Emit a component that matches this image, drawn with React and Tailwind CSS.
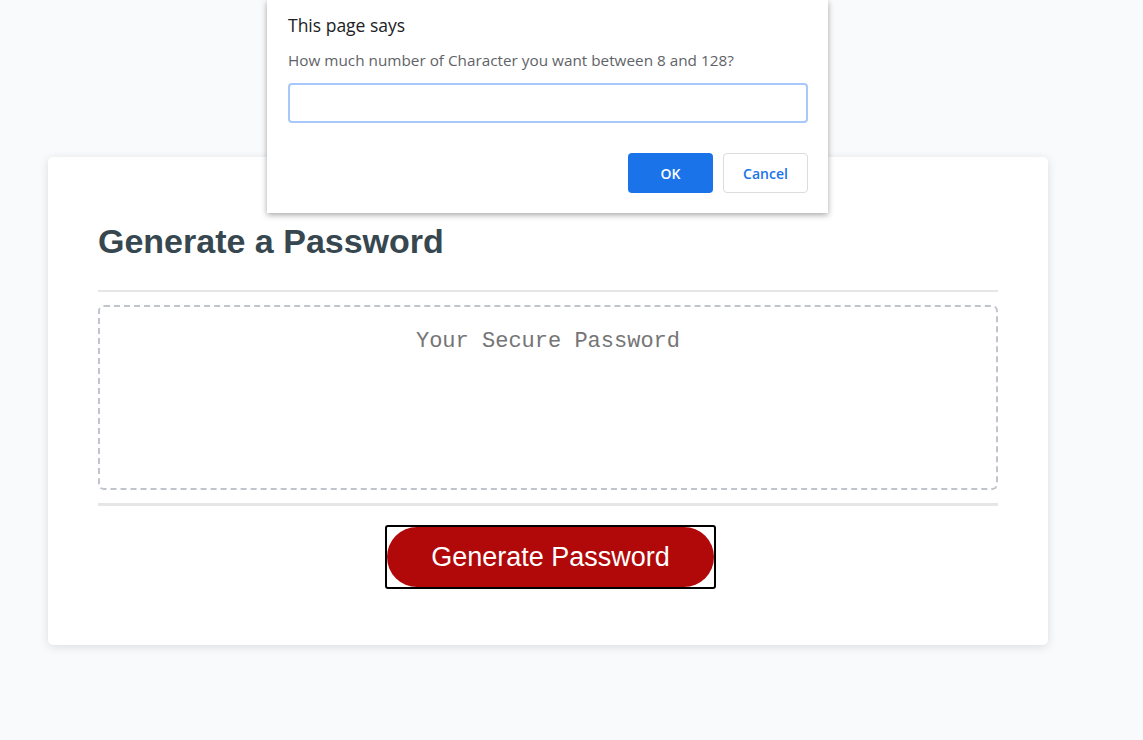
import React from 'react';

const PromptDialog = () => (
  <div className="absolute left-[267px] top-0 w-[561px] h-[213px] bg-white shadow-[0_2px_6px_rgba(0,0,0,0.35)] pl-[21px] pr-[20px] pt-[13px] font-['Open_Sans',sans-serif]">
    <p className="text-[17.5px] text-[#202124] leading-[24px]">This page says</p>
    <p className="mt-[13px] text-[15.3px] text-[#5f6368] leading-[20px]">How much number of Character you want between 8 and 128?</p>
    <div className="mt-[13px] h-[40px] w-full rounded-[4px] border-2 border-[#a8c7fa]"></div>
    <div className="mt-[30px] flex justify-end gap-[10px]">
      <button className="w-[85px] h-[40px] rounded-[4px] bg-[#1a73e8] text-white text-[14px] font-semibold">OK</button>
      <button className="w-[85px] h-[40px] rounded-[4px] border border-[#dadce0] bg-white text-[#1a73e8] text-[14px] font-semibold">Cancel</button>
    </div>
  </div>
);

export default function App() {
  return (
    <div className="relative min-h-[740px] bg-[#f9fafb] font-['Liberation_Sans',Arial,sans-serif] pt-[157px] px-[48px]">
      <div className="w-[1000px] bg-white rounded-[5px] shadow-[0_2px_10px_rgba(0,0,0,0.12)] px-[50px] pt-[63px] pb-[56px]">
        <h2 className="text-[34px] font-bold text-[#37474f] leading-[42px]">Generate a Password</h2>
        <div className="mt-[28px] border-t-2 border-[#e6e6e6]"></div>
        <div className="mt-[13px] h-[185px] rounded-[6px] border-2 border-dashed border-[#c0c4cc] pt-[20px] text-center font-['Liberation_Mono',monospace] text-[22px] text-[#757575] leading-[30px]">
          Your Secure Password
        </div>
        <div className="mt-[13px] border-t-[3px] border-[#e6e6e6]"></div>
        <div className="mt-[19px] flex justify-center">
          <button className="ml-[5px] w-[331px] h-[64px] border-2 border-black rounded-[3px] p-0 flex items-stretch">
            <span className="flex-1 rounded-[30px] bg-[#b10909] text-white text-[27px] flex items-center justify-center">Generate Password</span>
          </button>
        </div>
      </div>
      <PromptDialog />
    </div>
  );
}
